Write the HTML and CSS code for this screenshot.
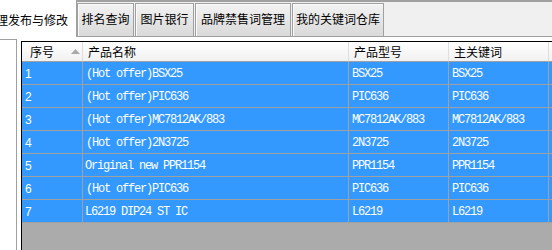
FILE: index.html
```html
<!DOCTYPE html>
<html lang="zh-CN">
<head>
  <meta charset="UTF-8"/>
  <title>产品管理</title>
  <link rel="stylesheet" href="styles.css">
</head>
<body>
  <div class="tabbar">
    <div class="tab active"><span class="cut">管理发布与修改</span></div>
    <div class="tab t2">排名查询</div>
    <div class="tab t3">图片银行</div>
    <div class="tab t4">品牌禁售词管理</div>
    <div class="tab t5">我的关键词仓库</div>
  </div>

  <div class="panel">
    <div class="side"></div>
    <div class="grid">
      <table>
        <colgroup>
          <col class="c1"><col class="c2"><col class="c3"><col class="c4"><col class="c5">
        </colgroup>
        <thead>
          <tr>
            <th class="first">序号<svg class="sort" width="9" height="5" viewBox="0 0 9 5"><path d="M4.5 0 L9 5 L0 5 Z" fill="#a9a9a9"/></svg></th>
            <th>产品名称</th>
            <th>产品型号</th>
            <th>主关键词</th>
            <th>排名</th>
          </tr>
        </thead>
        <tbody>
          <tr><td class="num">1</td><td>(Hot offer)BSX25</td><td>BSX25</td><td>BSX25</td><td>1</td></tr>
          <tr><td class="num">2</td><td>(Hot offer)PIC636</td><td>PIC636</td><td>PIC636</td><td>1</td></tr>
          <tr><td class="num">3</td><td>(Hot offer)MC7812AK/883</td><td>MC7812AK/883</td><td>MC7812AK/883</td><td>1</td></tr>
          <tr><td class="num">4</td><td>(Hot offer)2N3725</td><td>2N3725</td><td>2N3725</td><td>1</td></tr>
          <tr><td class="num">5</td><td class="tight">Original new PPR1154</td><td>PPR1154</td><td>PPR1154</td><td>1</td></tr>
          <tr><td class="num">6</td><td>(Hot offer)PIC636</td><td>PIC636</td><td>PIC636</td><td>1</td></tr>
          <tr><td class="num">7</td><td class="tight">L6219 DIP24 ST IC</td><td>L6219</td><td>L6219</td><td>1</td></tr>
        </tbody>
      </table>
    </div>
  </div>
</body>
</html>
```

FILE: styles.css
```css
body {
  margin: 0;
  width: 552px;
  height: 250px;
  overflow: hidden;
  background: #fff;
  font-family: "Noto Sans CJK SC", "Liberation Sans", sans-serif;
  font-size: 12px;
  color: #000;
}
.tabbar {
  display: flex;
  box-sizing: border-box;
  height: 37px;
  background: #f0f0f0;
  border-top: 2px solid #a0a0a0;
  border-bottom: 1px solid #a0a0a0;
}
.tab {
  box-sizing: border-box;
  height: 33px;
  margin-top: 1px;
  margin-left: 1px;
  border: 1px solid #a0a0a0;
  border-bottom: none;
  background: linear-gradient(#f3f3f3, #d9d9d9);
  box-shadow: inset 1px 1px 0 #fafafa;
  line-height: 30px;
  text-align: center;
  white-space: nowrap;
}
.tab.active {
  width: 77px;
  height: 37px;
  margin: -2px 0 -1px 0;
  border: none;
  border-right: 1px solid #a0a0a0;
  background: #fff;
  box-shadow: none;
  line-height: 39px;
  text-align: left;
  overflow: hidden;
}
.tab.active .cut {
  display: inline-block;
  margin-left: -16px;
}
.t2 { width: 57px; margin-left: 0; }
.t3 { width: 59px; }
.t4 { width: 96px; }
.t5 { width: 92px; }

.panel {
  display: flex;
  height: 213px;
}
.side {
  width: 16px;
  margin-top: 2px;
  border-top: 1px solid #a0a0a0;
  border-right: 1px solid #a0a0a0;
}
.grid {
  flex: 1;
  margin: 4px 0 0 4px;
  border-top: 1px solid #000;
  border-left: 1px solid #000;
  background: #ababab;
  overflow: hidden;
}
table {
  table-layout: fixed;
  width: 607px;
  border-collapse: separate;
  border-spacing: 0;
}
.c1 { width: 61px; }
.c2 { width: 266px; }
.c3 { width: 100px; }
.c4 { width: 100px; }
.c5 { width: 80px; }
th {
  box-sizing: border-box;
  height: 20px;
  padding: 0 0 0 5px;
  font-weight: normal;
  text-align: left;
  background: linear-gradient(#fff, #f1f1f1);
  border-right: 1px solid #dedede;
  border-bottom: 1px solid #a0a0a0;
  white-space: nowrap;
  overflow: hidden;
}
th.first { padding-left: 8px; }
.sort {
  float: right;
  margin: 6px 2px 0 0;
}
td {
  box-sizing: border-box;
  height: 23px;
  padding: 1px 0 0 3px;
  background: #3399ff;
  color: #fff;
  border-right: 1px solid #a0a0a0;
  border-bottom: 1px solid #a0a0a0;
  font-family: "Liberation Mono", monospace;
  font-size: 12px;
  letter-spacing: -1.2px;
  white-space: nowrap;
  overflow: hidden;
}
td.num {
  padding-left: 3px;
  font-family: "Liberation Sans", sans-serif;
  font-size: 12px;
  letter-spacing: 0;
}
td.tight { padding-left: 2px; }
```
